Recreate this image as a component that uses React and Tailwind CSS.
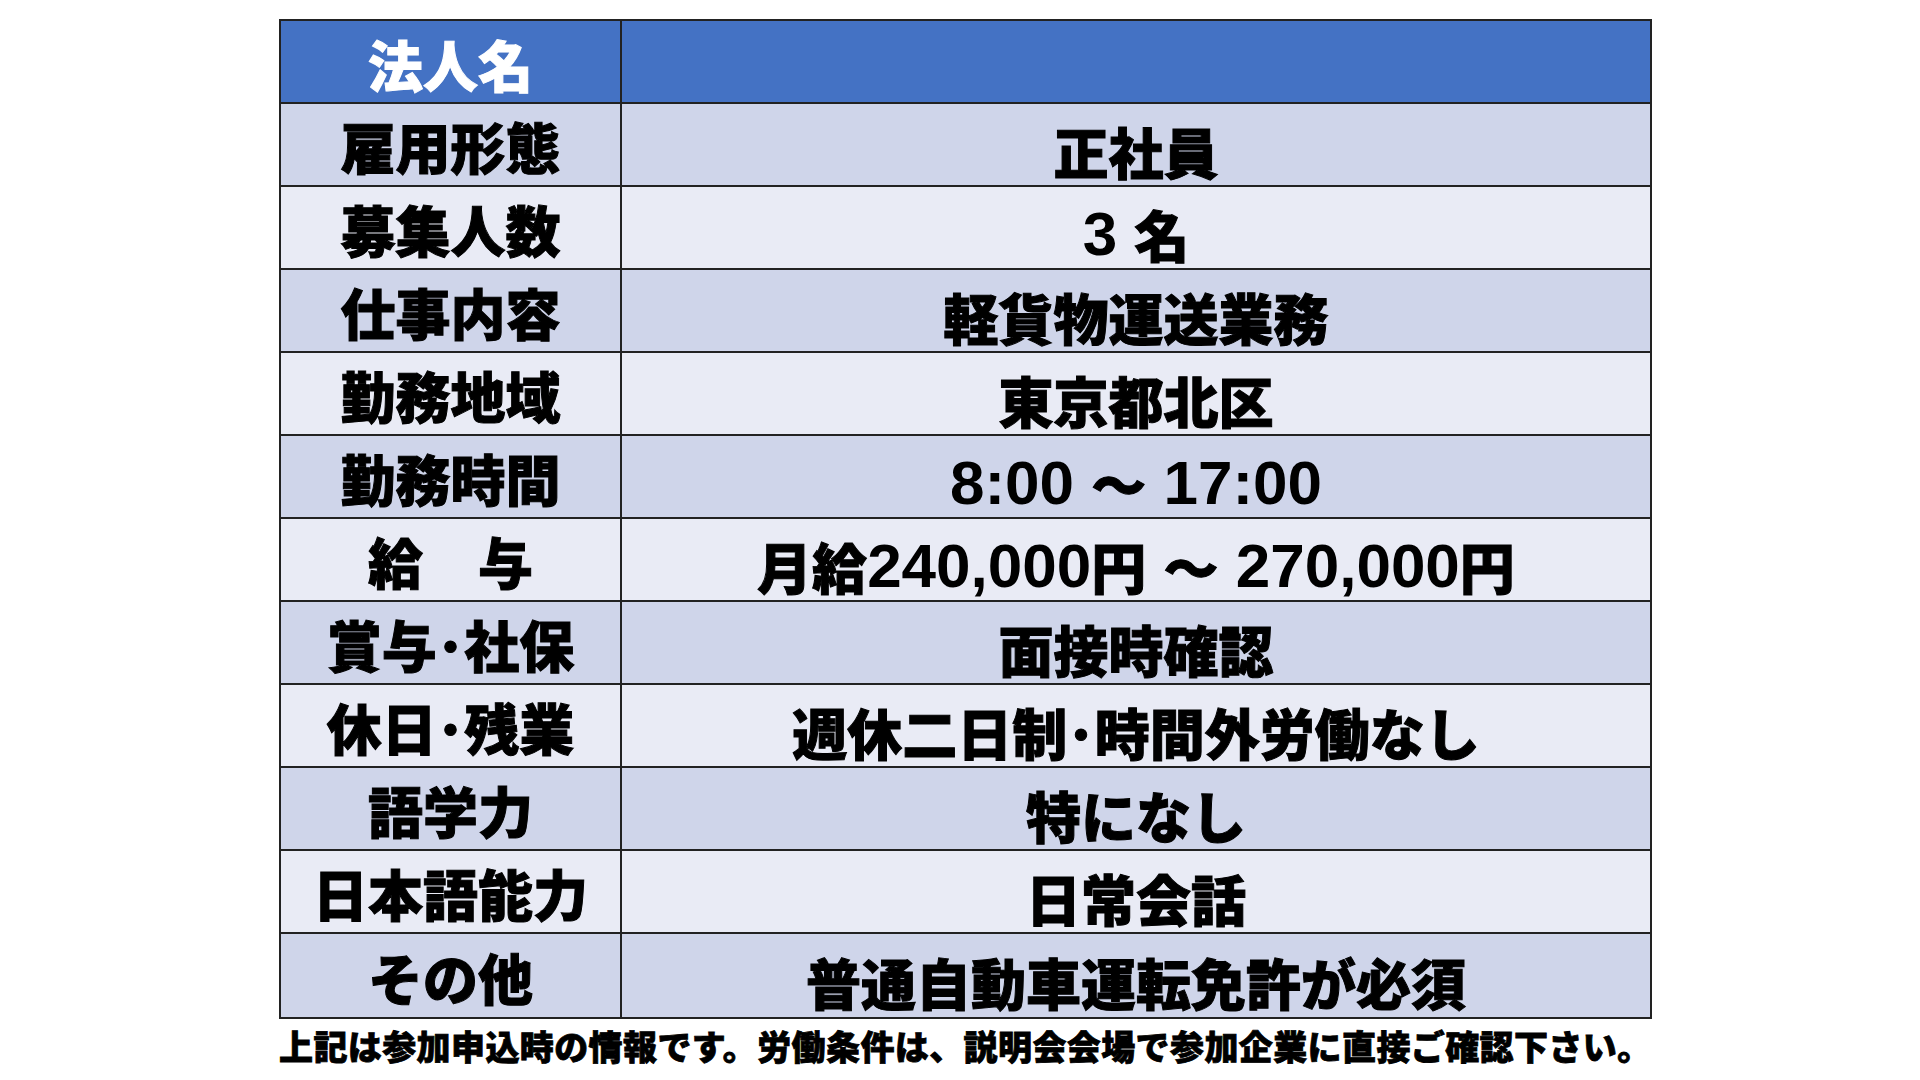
import React from 'react';

const rows = [
  { label: '雇用形態', value: '正社員' },
  { label: '募集人数', value: '3 名' },
  { label: '仕事内容', value: '軽貨物運送業務' },
  { label: '勤務地域', value: '東京都北区' },
  { label: '勤務時間', value: '8:00 ～ 17:00' },
  { label: '給　与', value: '月給240,000円 ～ 270,000円' },
  { label: '賞与･社保', value: '面接時確認' },
  { label: '休日･残業', value: '週休二日制･時間外労働なし' },
  { label: '語学力', value: '特になし' },
  { label: '日本語能力', value: '日常会話' },
  { label: 'その他', value: '普通自動車運転免許が必須' },
];

const font = { fontFamily: '"Noto Sans CJK JP", "Noto Sans", sans-serif' };
const latin = { fontFamily: '"Liberation Sans", Arial, sans-serif' };

// digits and spaces in the value column come out larger, as in the original sheet
function Value({ text }) {
  const parts = text.split(/([0-9:, ]+)/).filter(Boolean);
  return (
    <>
      {parts.map((p, i) =>
        /^[0-9:, ]+$/.test(p) ? (
          <span key={i} className="text-[62px] font-bold [-webkit-text-stroke:0px_black]" style={latin}>
            {p}
          </span>
        ) : (
          <span key={i}>{p}</span>
        )
      )}
    </>
  );
}

export default function App() {
  return (
    <div className="w-[1920px] h-[1080px] bg-white pt-[19px] pl-[279px]" style={font}>
      <div className="w-[1373px] border-2 border-[#222]">
        <div className="flex h-[83px] bg-[#4472c4] border-b-2 border-[#222]">
          <div className="w-[341px] shrink-0 border-r-2 border-[#222] flex items-center justify-center pt-[3px] text-[55px] font-black text-white leading-none [-webkit-text-stroke:1px_white]">
            法人名
          </div>
          <div className="flex-1" />
        </div>
        {rows.map((r, i) => (
          <div
            key={r.label}
            className={`flex h-[83px] ${i % 2 === 0 ? 'bg-[#cfd5ea]' : 'bg-[#e9ebf5]'} ${i < rows.length - 1 ? 'border-b-2 border-[#222]' : ''}`}
          >
            <div className="w-[341px] shrink-0 border-r-2 border-[#222] flex items-center justify-center pt-[2px] text-[55px] font-black text-black leading-none whitespace-pre [-webkit-text-stroke:1px_black]">
              {r.label}
            </div>
            <div className="flex-1 flex items-center justify-center pt-[12px] text-[55px] font-black text-black leading-none whitespace-pre [-webkit-text-stroke:1px_black]">
              <Value text={r.value} />
            </div>
          </div>
        ))}
      </div>
      <div className="mt-[10px] text-[34px] tracking-[0.4px] font-black text-black leading-none whitespace-nowrap [-webkit-text-stroke:0.8px_black]">
        上記は参加申込時の情報です。労働条件は、説明会会場で参加企業に直接ご確認下さい。
      </div>
    </div>
  );
}
